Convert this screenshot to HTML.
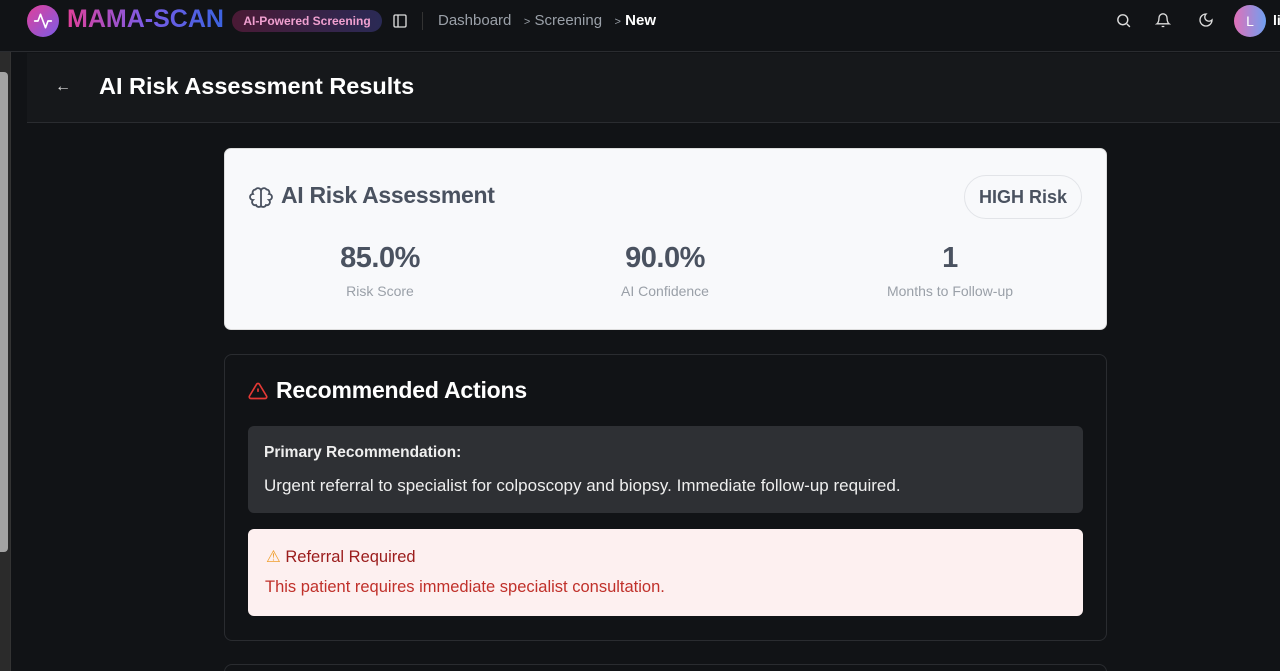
<!DOCTYPE html>
<html><head><meta charset="utf-8"><style>
*{box-sizing:border-box;margin:0;padding:0}
html,body{width:1280px;height:671px;overflow:hidden}
body{background:#111316;font-family:"Liberation Sans",sans-serif;color:#fff;position:relative}
.abs{position:absolute}
.top{left:0;top:0;width:1280px;height:52px;border-bottom:1px solid #2a2c30;background:#111316}
.sb{left:0;top:52px;width:11px;height:619px;background:#2b2b2b;border-right:1px solid #333}
.thumb{left:0;top:72px;width:8px;height:480px;background:#a3a3a3;border-radius:0 4px 4px 0}
.hdr{left:27px;top:53px;width:1253px;height:70px;background:#16181b;border-bottom:1px solid #2a2c30}
.card{left:224px;top:148px;width:883px;height:182px;background:#f8f9fb;border-radius:7px;border:1px solid #ddd}
.card2{left:224px;top:354px;width:883px;height:287px;border:1px solid #2a2c30;border-radius:8px}
.stat{position:absolute;top:93px;width:280px;text-align:center}
.stat b{display:block;font-size:29px;color:#4a5260;font-weight:bold;letter-spacing:-0.5px}
.stat span{display:block;font-size:14px;color:#9aa0a8;margin-top:8px}
</style></head><body>
<div class="abs top"></div>
<div class="abs" style="left:27px;top:5px;width:32px;height:32px;border-radius:50%;background:linear-gradient(135deg,#e0409a,#7b5ce6)"></div>
<svg class="abs" style="left:33px;top:11px" width="20" height="20" viewBox="0 0 24 24" fill="none" stroke="#fff" stroke-width="2" stroke-linecap="round" stroke-linejoin="round"><path d="M22 12h-4l-3 8L9 4l-3 8H2"/></svg>
<div class="abs" style="left:67px;top:5px;font-size:25px;font-weight:bold;background:linear-gradient(90deg,#e0409a,#7b5ce6,#3b63e0);-webkit-background-clip:text;color:transparent">MAMA-SCAN</div>
<div class="abs" style="left:232px;top:10px;width:150px;height:22px;border-radius:11px;background:linear-gradient(90deg,#4a1a35,#2a2a55);color:#f0a0d0;font-size:12px;font-weight:bold;text-align:center;line-height:22px">AI-Powered Screening</div>
<svg class="abs" style="left:392px;top:13px" width="16" height="16" viewBox="0 0 24 24" fill="none" stroke="#ddd" stroke-width="2"><rect x="3" y="3" width="18" height="18" rx="2"/><path d="M9 3v18"/></svg>
<div class="abs" style="left:422px;top:12px;width:1px;height:18px;background:#333"></div>
<div class="abs" style="left:438px;top:12px;font-size:15px;color:#9aa0a8">Dashboard &nbsp; <span style="font-size:11px">&gt;</span> Screening &nbsp; <span style="font-size:11px">&gt;</span> <span style="color:#fff;font-weight:bold">New</span></div>
<svg class="abs" style="left:1115px;top:12px" width="17" height="17" viewBox="0 0 24 24" fill="none" stroke="#ddd" stroke-width="2"><circle cx="11" cy="11" r="7"/><path d="M21 21l-4.3-4.3"/></svg>
<svg class="abs" style="left:1155px;top:12px" width="16" height="17" viewBox="0 0 24 24" fill="none" stroke="#ddd" stroke-width="2"><path d="M6 8a6 6 0 0 1 12 0c0 7 3 9 3 9H3s3-2 3-9M10 21h4"/></svg>
<svg class="abs" style="left:1198px;top:12px" width="16" height="16" viewBox="0 0 24 24" fill="none" stroke="#ddd" stroke-width="2"><path d="M12 3a6 6 0 0 0 9 9 9 9 0 1 1-9-9z"/></svg>
<div class="abs" style="left:1234px;top:5px;width:32px;height:32px;border-radius:50%;background:linear-gradient(90deg,#e070b8,#70a0f0);text-align:center;line-height:32px;font-size:14px">L</div>
<div class="abs" style="left:1273px;top:12px;font-size:14px;font-weight:bold">li</div>
<div class="abs sb"></div><div class="abs thumb"></div>
<div class="abs hdr"></div>
<div class="abs" style="left:55px;top:78px;font-size:16px;color:#ddd">&#8592;</div>
<div class="abs" style="left:99px;top:73px;font-size:23.5px;font-weight:bold">AI Risk Assessment Results</div>
<div class="abs card">
<svg class="abs" style="left:24px;top:37px" width="24" height="24" viewBox="0 0 24 24" fill="none" stroke="#4a5260" stroke-width="1.8"><path d="M12 5a3 3 0 0 0-5.5-1.5A3 3 0 0 0 4 8a3 3 0 0 0 0 6 3 3 0 0 0 3 5 3 3 0 0 0 5 1V5zM12 5a3 3 0 0 1 5.5-1.5A3 3 0 0 1 20 8a3 3 0 0 1 0 6 3 3 0 0 1-3 5 3 3 0 0 1-5 1"/></svg>
<div class="abs" style="left:56px;top:33px;font-size:23px;font-weight:bold;color:#4a5260;letter-spacing:-0.3px">AI Risk Assessment</div>
<div class="abs" style="left:739px;top:26px;width:118px;height:44px;border:1px solid #e2e4e8;border-radius:22px;text-align:center;line-height:42px;font-size:18px;font-weight:bold;color:#4a5260">HIGH Risk</div>
<div class="stat" style="left:15px"><b>85.0%</b><span>Risk Score</span></div>
<div class="stat" style="left:300px"><b>90.0%</b><span>AI Confidence</span></div>
<div class="stat" style="left:585px"><b>1</b><span>Months to Follow-up</span></div>
</div>
<div class="abs card2">
<svg class="abs" style="left:23px;top:26px" width="20" height="20" viewBox="0 0 24 24" fill="none" stroke="#e53935" stroke-width="2"><path d="M10.3 3.9L1.8 18a2 2 0 0 0 1.7 3h17a2 2 0 0 0 1.7-3L13.7 3.9a2 2 0 0 0-3.4 0zM12 9v4M12 17h.01"/></svg>
<div class="abs" style="left:51px;top:22px;font-size:23px;font-weight:bold;letter-spacing:-0.2px">Recommended Actions</div>
<div class="abs" style="left:23px;top:71px;width:835px;height:87px;background:#2e3034;border-radius:6px">
<div class="abs" style="left:16px;top:18px;font-size:15.5px;font-weight:bold;color:#eee">Primary Recommendation:</div>
<div class="abs" style="left:16px;top:50px;font-size:17px;color:#eee">Urgent referral to specialist for colposcopy and biopsy. Immediate follow-up required.</div>
</div>
<div class="abs" style="left:23px;top:174px;width:835px;height:87px;background:#fdf0f0;border-radius:6px">
<div class="abs" style="left:18px;top:18px;font-size:16.5px;color:#9b1c1c"><span style="color:#f0a030">&#9888;</span> Referral Required</div>
<div class="abs" style="left:17px;top:49px;font-size:16.5px;color:#c0302a">This patient requires immediate specialist consultation.</div>
</div>
</div>
<div class="abs" style="left:224px;top:664px;width:883px;height:20px;border:1px solid #2a2c30;border-radius:8px"></div>
</body></html>
